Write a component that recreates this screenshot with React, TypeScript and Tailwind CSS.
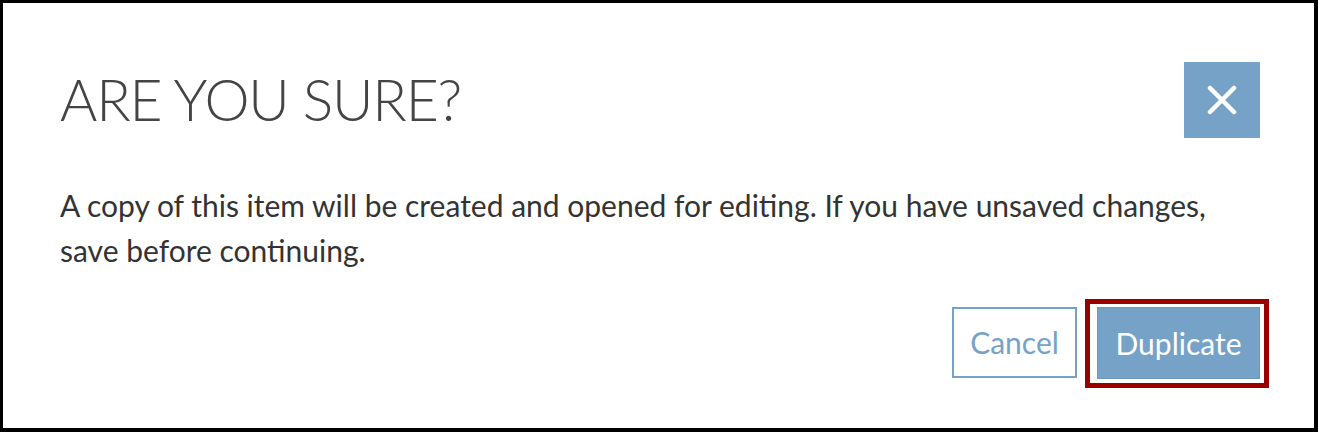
import React from 'react';

const font = { fontFamily: 'Lato, "Liberation Sans", sans-serif' };

function CloseIcon() {
  return (
    <svg width="30" height="30" viewBox="0 0 30 30" fill="none" aria-hidden="true">
      <path d="M3 3L27 27M27 3L3 27" stroke="#fff" strokeWidth="4.5" strokeLinecap="round" />
    </svg>
  );
}

export default function App() {
  return (
    <div
      className="flex h-[432px] w-[1318px] flex-col border-t-[3px] border-r-[4px] border-b-[4px] border-l-[3px] border-black bg-white pt-[59px] pr-[54px] pl-[57px]"
      style={font}
    >
      {/* header */}
      <div className="flex items-start justify-between">
        <h1 className="flex h-[76px] items-center text-[57px] font-light tracking-[-1.2px] text-[#444]">
          ARE YOU SURE?
        </h1>
        <button className="flex h-[76px] w-[76px] items-center justify-center bg-[#76a2c8]">
          <CloseIcon />
        </button>
      </div>

      <p className="mt-[45px] text-[30px] leading-[45px] text-[#333]">
        A copy of this item will be created and opened for editing. If you have unsaved changes,
        <br />
        save before continuing.
      </p>

      <div className="mt-[26px] flex items-start justify-end">
        <button className="mt-[8px] h-[71px] w-[125px] border-2 border-[#76a2c8] bg-white text-[30px] text-[#76a2c8]">
          Cancel
        </button>
        <div className="mr-[-9px] ml-[8px] border-[5px] border-[#990000] pt-[3px] pr-[4px] pb-[4px] pl-[7px]">
          <button className="h-[72px] w-[163px] border border-[#6c98bf] bg-[#76a2c8] text-[30px] text-white">
            Duplicate
          </button>
        </div>
      </div>
    </div>
  );
}
